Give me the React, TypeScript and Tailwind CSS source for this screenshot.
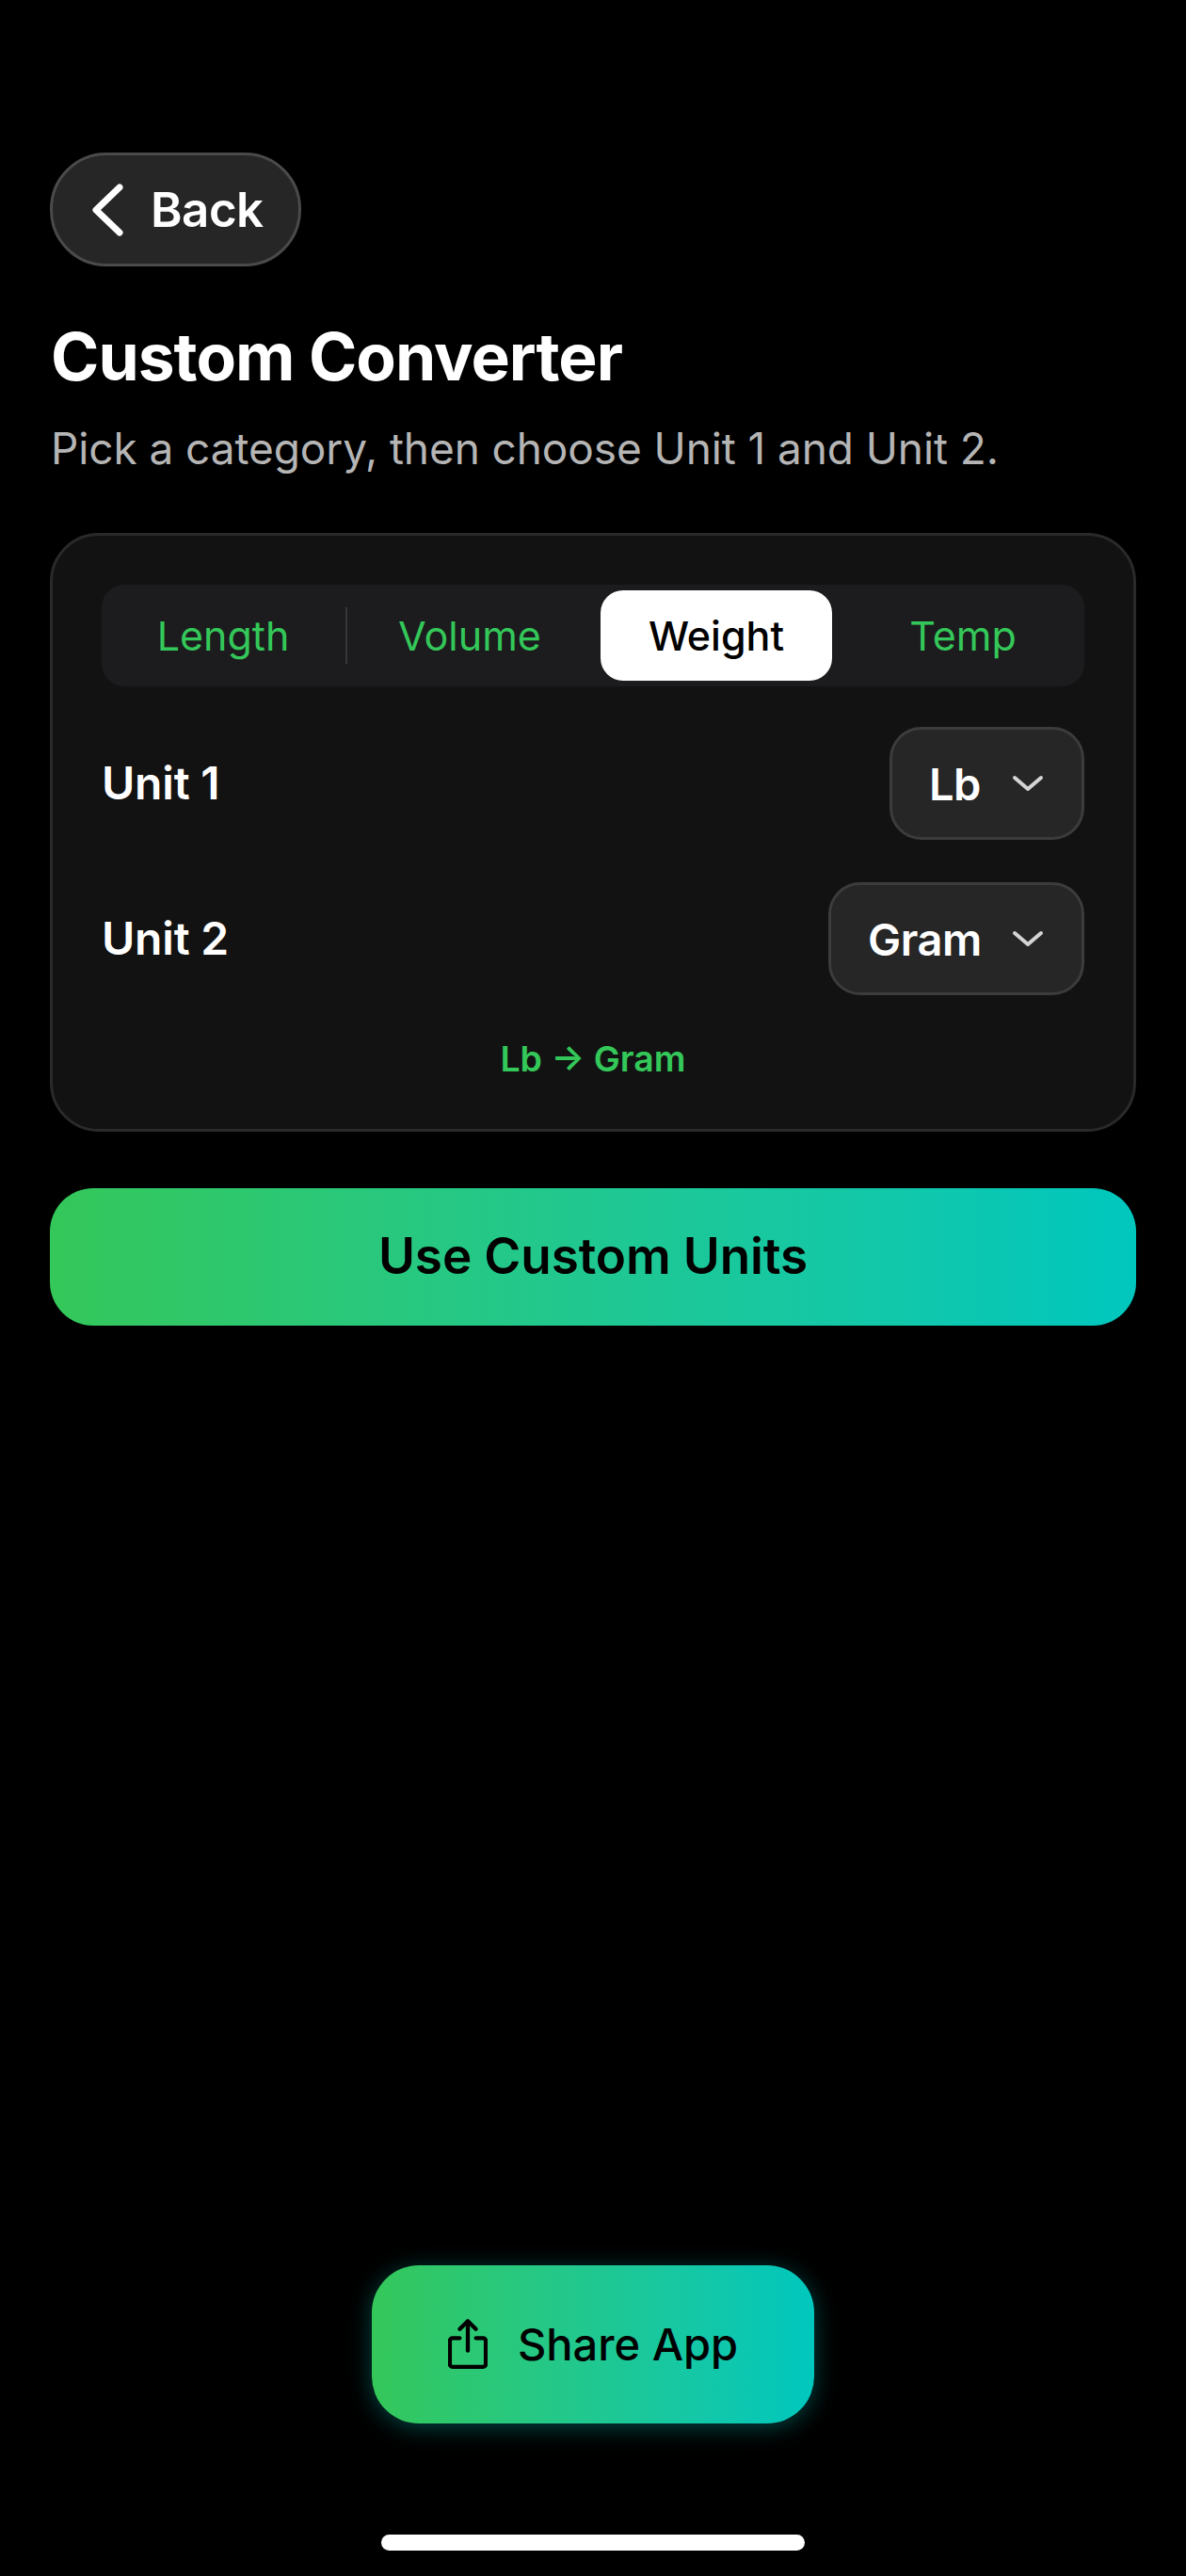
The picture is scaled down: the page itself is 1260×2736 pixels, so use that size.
const font = "font-['Inter',sans-serif]";

const categories = ['Length', 'Volume', 'Weight', 'Temp'];

function Chevron() {
  return (
    <svg width="34" height="20" viewBox="0 0 34 20" fill="none" stroke="#d4d4d4" strokeWidth="4" strokeLinecap="round" strokeLinejoin="round">
      <path d="M3 4l14 12L31 4" />
    </svg>
  );
}

function ShareIcon() {
  return (
    <svg width="42" height="56" viewBox="0 0 44 56" fill="none" stroke="#000" strokeWidth="4.5" strokeLinecap="round" strokeLinejoin="round">
      <path d="M13 21H5a3 3 0 0 0-3 3v26a3 3 0 0 0 3 3h34a3 3 0 0 0 3-3V24a3 3 0 0 0-3-3h-8" />
      <path d="M22 35V3" />
      <path d="M13 11l9-9 9 9" />
    </svg>
  );
}

function UnitRow({ label, value, width }: { label: string; value: string; width: string }) {
  return (
    <div className="flex items-center justify-between">
      <span className="text-[48px] leading-none font-semibold text-white tracking-[-0.2px]">{label}</span>
      <div className={`flex h-[120px] items-center justify-between rounded-[34px] border-[3px] border-[#3c3c3c] bg-[#262626] pl-[39px] pr-[40px] ${width}`}>
        <span className="text-[47px] leading-none font-semibold text-white tracking-[-0.5px]">{value}</span>
        <Chevron />
      </div>
    </div>
  );
}

export default function App() {
  return (
    <div className={`flex h-[2736px] w-[1260px] flex-col bg-black px-[53px] pt-[162px] ${font}`}>
      <button className="flex h-[121px] w-[267px] items-center gap-[29px] rounded-[60px] border-[3px] border-[#4a4a4a] bg-[#262626] pl-[41px]">
        <svg width="34" height="56" viewBox="0 0 34 56" fill="none" stroke="#fff" strokeWidth="7" strokeLinecap="round" strokeLinejoin="round">
          <path d="M30 4L5 28l25 24" />
        </svg>
        <span className="text-[51px] leading-none font-semibold text-white tracking-[-0.5px]">Back</span>
      </button>

      <h1 className="mt-[55px] ml-[1px] text-[69.5px] leading-[82px] font-bold text-white tracking-[-1px]">Custom Converter</h1>
      <p className="mt-[28px] ml-[1px] text-[46px] leading-[56px] font-normal text-[#b5b5b5] tracking-[-0.1px]">
        Pick a category, then choose Unit 1 and Unit 2.
      </p>

      <div className="mt-[62px] h-[636px] rounded-[52px] border-[3px] border-[#2a2a2a] bg-[#121212] px-[52px] pt-[52px]">
        <div className="flex h-[108px] items-center rounded-[24px] bg-[#1c1c1e] p-[6px]">
          {categories.map((name, i) => (
            <div key={name} className="contents">
              {i > 0 && (
                <div className="flex h-[60px] w-[16px] justify-center">
                  {i === 1 && <div className="h-full w-[2px] bg-[#38383a]" />}
                </div>
              )}
              <div
                className={`flex h-[96px] flex-1 items-center justify-center rounded-[24px] text-[43px] leading-none ${
                  name === 'Weight' ? 'bg-white font-medium text-black' : 'font-normal text-[#34c759]'
                }`}
              >
                {name}
              </div>
            </div>
          ))}
        </div>

        <div className="mt-[43px] flex flex-col gap-[45px]">
          <UnitRow label="Unit 1" value="Lb" width="w-[207px]" />
          <UnitRow label="Unit 2" value="Gram" width="w-[272px]" />
        </div>

        <p className="mt-[48px] text-center text-[37.5px] leading-[40px] font-semibold text-[#34c759]">Lb → Gram</p>
      </div>

      <button className="mt-[60px] h-[146px] w-full rounded-[46px] bg-gradient-to-r from-[#34c759] to-[#00c7be] text-[53px] font-semibold text-black tracking-[-0.1px]">
        Use Custom Units
      </button>

      <div className="mt-auto flex flex-col items-center pb-[27px]">
        <button className="flex h-[168px] w-[470px] items-center justify-center gap-[32px] rounded-[50px] bg-gradient-to-r from-[#34c759] to-[#00c7be] text-[47px] font-medium text-black shadow-[0_4px_24px_rgba(0,199,190,0.35)]">
          <ShareIcon />
          <span>Share App</span>
        </button>
        <div className="mt-[118px] h-[17px] w-[450px] rounded-full bg-white" />
      </div>
    </div>
  );
}
